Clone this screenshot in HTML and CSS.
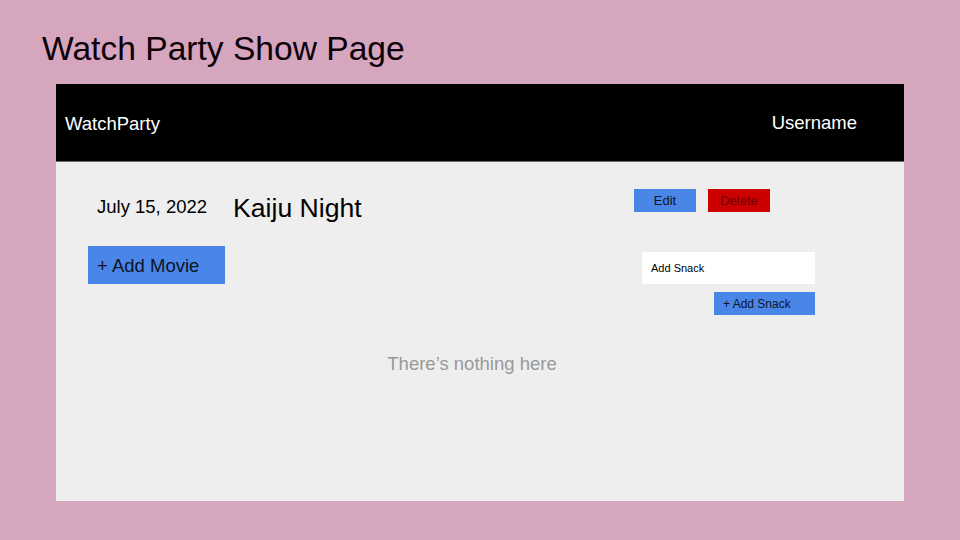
FILE: index.html
```html
<!DOCTYPE html>
<html>
<head>
<meta charset="utf-8">
<link rel="stylesheet" href="styles.css">
</head>
<body>
<h1 class="page-title">Watch Party Show Page</h1>
<div class="panel">
  <header class="topbar">
    <span class="brand">WatchParty</span>
    <span class="user">Username</span>
  </header>
  <main class="content">
    <div class="columns">
      <div class="left">
        <div class="event-head">
          <span class="date">July 15, 2022</span>
          <span class="event-title">Kaiju Night</span>
        </div>
        <button class="btn add-movie">+ Add Movie</button>
      </div>
      <div class="right">
        <div class="actions">
          <button class="btn edit">Edit</button>
          <button class="btn delete">Delete</button>
        </div>
        <div class="snack-input">Add Snack</div>
        <button class="btn add-snack">+ Add Snack</button>
      </div>
    </div>
    <p class="empty">There’s nothing here</p>
  </main>
</div>
</body>
</html>
```
FILE: styles.css
```css
html, body {
  margin: 0;
  padding: 0;
}
body {
  width: 960px;
  height: 540px;
  background: #d5a6bd;
  font-family: "Liberation Sans", Arial, sans-serif;
  color: #000;
  overflow: hidden;
}
.page-title {
  margin: 0;
  padding: 29px 0 0 42px;
  font-size: 33.6px;
  line-height: 40px;
  font-weight: normal;
  color: #0c0009;
}
.panel {
  margin: 15px 0 0 56px;
  width: 848px;
}
.topbar {
  height: 77px;
  background: #000;
  border-bottom: 1px solid #6b6b6b;
  display: flex;
  align-items: center;
  justify-content: space-between;
  padding: 0 47px 0 9px;
  color: #fff;
  font-size: 18.5px;
}
.brand {
  margin-top: 2px;
}
.user {
  font-size: 18.5px;
}
.content {
  height: 339px;
  background: #eeeeee;
}
.columns {
  display: flex;
  align-items: flex-start;
}
.left {
  width: 578px;
  padding-top: 27px;
}
.event-head {
  display: flex;
  align-items: center;
  height: 36px;
  padding-left: 41px;
}
.date {
  font-size: 18.5px;
  margin-right: 26px;
}
.event-title {
  font-size: 26.6px;
  margin-top: 2px;
}
.btn {
  border: none;
  margin: 0;
  font-family: "Liberation Sans", Arial, sans-serif;
  text-align: left;
  padding: 0;
  display: block;
  background: #4a86e8;
  color: #0d1526;
}
.add-movie {
  margin: 21px 0 0 32px;
  width: 137px;
  height: 38px;
  font-size: 18.5px;
  padding: 2px 0 0 9px;
}
.right {
  padding-top: 27px;
}
.actions {
  display: flex;
  gap: 12px;
}
.edit, .delete {
  width: 62px;
  height: 23px;
  font-size: 13px;
  text-align: center;
}
.delete {
  background: #cc0000;
  color: #6e0000;
}
.snack-input {
  margin: 40px 0 0 8px;
  width: 164px;
  height: 32px;
  background: #fff;
  font-size: 11px;
  padding-left: 9px;
  display: flex;
  align-items: center;
}
.add-snack {
  margin: 8px 0 0 80px;
  width: 101px;
  height: 23px;
  font-size: 12px;
  padding-left: 9px;
}
.empty {
  margin: 38px 0 0 0;
  padding-right: 16px;
  text-align: center;
  font-size: 18.5px;
  line-height: 22px;
  color: #999999;
}
```
